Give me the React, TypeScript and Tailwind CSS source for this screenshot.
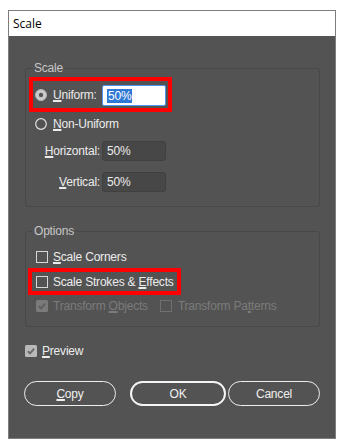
import React from 'react';

const font = { fontFamily: '"Liberation Sans", Arial, sans-serif' };

const Radio = ({ on }: { on?: boolean }) => (
  <svg width="12" height="12" viewBox="0 0 12 12" className="shrink-0">
    {on ? (
      <>
        <circle cx="6" cy="6" r="5.5" fill="#cbcbcb" stroke="#b5b5b5" strokeWidth="1" />
        <circle cx="6" cy="6" r="2.2" fill="#555555" />
      </>
    ) : (
      <circle cx="6" cy="6" r="5.3" fill="none" stroke="#e2e2e2" strokeWidth="1.2" />
    )}
  </svg>
);

const Check = ({ checked, disabled }: { checked?: boolean; disabled?: boolean }) => {
  const box = disabled ? '#7a7a7a' : '#b9b9b9';
  return (
    <svg width="12" height="12" viewBox="0 0 12 12" className="shrink-0">
      {checked ? (
        <>
          <rect x="0" y="0" width="12" height="12" rx="1.5" fill={box} />
          <path d="M2.8 6.2 L5 8.3 L9.2 3.6" fill="none" stroke={disabled ? '#5e5e5e' : '#6c6c6c'} strokeWidth="1.9" />
        </>
      ) : (
        <rect x="0.5" y="0.5" width="11" height="11" fill="none" stroke={disabled ? '#6f6f6f' : '#d6d6d6'} strokeWidth="1" />
      )}
    </svg>
  );
};

// mnemonic letter, underlined like the Windows access keys
const U = ({ children }: { children: React.ReactNode }) => (
  <span className="underline decoration-2 underline-offset-[1px]">{children}</span>
);

const Group = ({ title, className, children }: { title: string; className?: string; children: React.ReactNode }) => (
  <fieldset className={`w-[295px] rounded-[3px] border border-[#484848] ${className ?? ''}`}>
    <legend className="ml-[6px] px-[2px] text-[12px] leading-[16px] text-[#c6c6c6]">{title}</legend>
    {children}
  </fieldset>
);

export default function App() {
  return (
    <div className="h-[448px] w-[344px] bg-white pt-[10px] pl-[8px] tracking-[-0.2px] whitespace-nowrap" style={font}>
      <div className="w-[328px] border border-[#7d7d7d]">
        <div className="flex h-[25px] items-center bg-white pl-[4px] text-[12px] tracking-normal text-black" style={{ fontFamily: '"Open Sans", "Noto Sans", sans-serif' }}>
          Scale
        </div>
        <div className="h-[402px] bg-[#535353] pl-[16px] pt-[24px] text-[12px] text-[#ececec]">
          <Group title="Scale" className="pb-[14px]">
            <div className="ml-[3px] mt-px flex h-[35px] w-[143px] items-center border-4 border-[#ff0000] pl-[2px] pr-[2px]">
              <Radio on />
              <span className="ml-[6px]"><U>U</U>niform:</span>
              <div className="ml-auto mt-[2px] flex h-[21px] w-[64px] items-center rounded-[2px] border border-[#4f97ee] bg-white pl-[4px]">
                <span className="bg-[#2f78d6] px-px leading-[14px] text-white">50%</span>
              </div>
            </div>
            <div className="mt-[2px] flex h-[20px] items-center pl-[9px]">
              <Radio />
              <span className="ml-[6px]"><U>N</U>on-Uniform</span>
            </div>
            <div className="mt-[7px] flex h-[20px] items-center">
              <span className="w-[76px] pr-[2px] text-right"><U>H</U>orizontal:</span>
              <div className="flex h-[20px] w-[64px] items-center rounded-[3px] border border-[#404040] bg-[#474747] pl-[4px]">50%</div>
            </div>
            <div className="mt-[11px] flex h-[20px] items-center">
              <span className="w-[76px] pr-[2px] text-right"><U>V</U>ertical:</span>
              <div className="flex h-[20px] w-[64px] items-center rounded-[3px] border border-[#404040] bg-[#474747] pl-[4px]">50%</div>
            </div>
          </Group>

          <Group title="Options" className="mt-[16px] pb-[11px]">
            <div className="mt-[9px] flex h-[18px] items-center pl-[10px]">
              <Check />
              <span className="ml-[5px]"><U>S</U>cale Corners</span>
            </div>
            <div className="ml-[2px] mt-[2px] flex h-[27px] w-[153px] items-center border-4 border-[#ff0000] pl-[4px]">
              <Check />
              <span className="ml-[5px]">Scale Strokes &amp; <U>E</U>ffects</span>
            </div>
            <div className="mt-[2px] flex h-[18px] items-center pl-[10px] text-[#7b7b7b]">
              <Check checked disabled />
              <span className="ml-[5px]">Transform <U>O</U>bjects</span>
              <span className="ml-[12px] flex"><Check disabled /></span>
              <span className="ml-[6px]">Transform Pa<U>t</U>terns</span>
            </div>
          </Group>

          <div className="mt-[14px] flex h-[19px] items-center">
            <Check checked />
            <span className="ml-[5px]"><U>P</U>review</span>
          </div>

          <div className="-ml-px mt-[21px] flex items-center">
            <button className="h-[25px] w-[92px] rounded-full border-[1.5px] border-[#ededed] text-[12px] text-[#f0f0f0]"><U>C</U>opy</button>
            <button className="ml-[14px] h-[25px] w-[96px] rounded-full border-2 border-[#f5f5f5] text-[12px] text-[#f0f0f0]">OK</button>
            <button className="ml-[2px] h-[25px] w-[92px] rounded-full border-[1.5px] border-[#ededed] text-[12px] text-[#f0f0f0]">Cancel</button>
          </div>
        </div>
      </div>
    </div>
  );
}
